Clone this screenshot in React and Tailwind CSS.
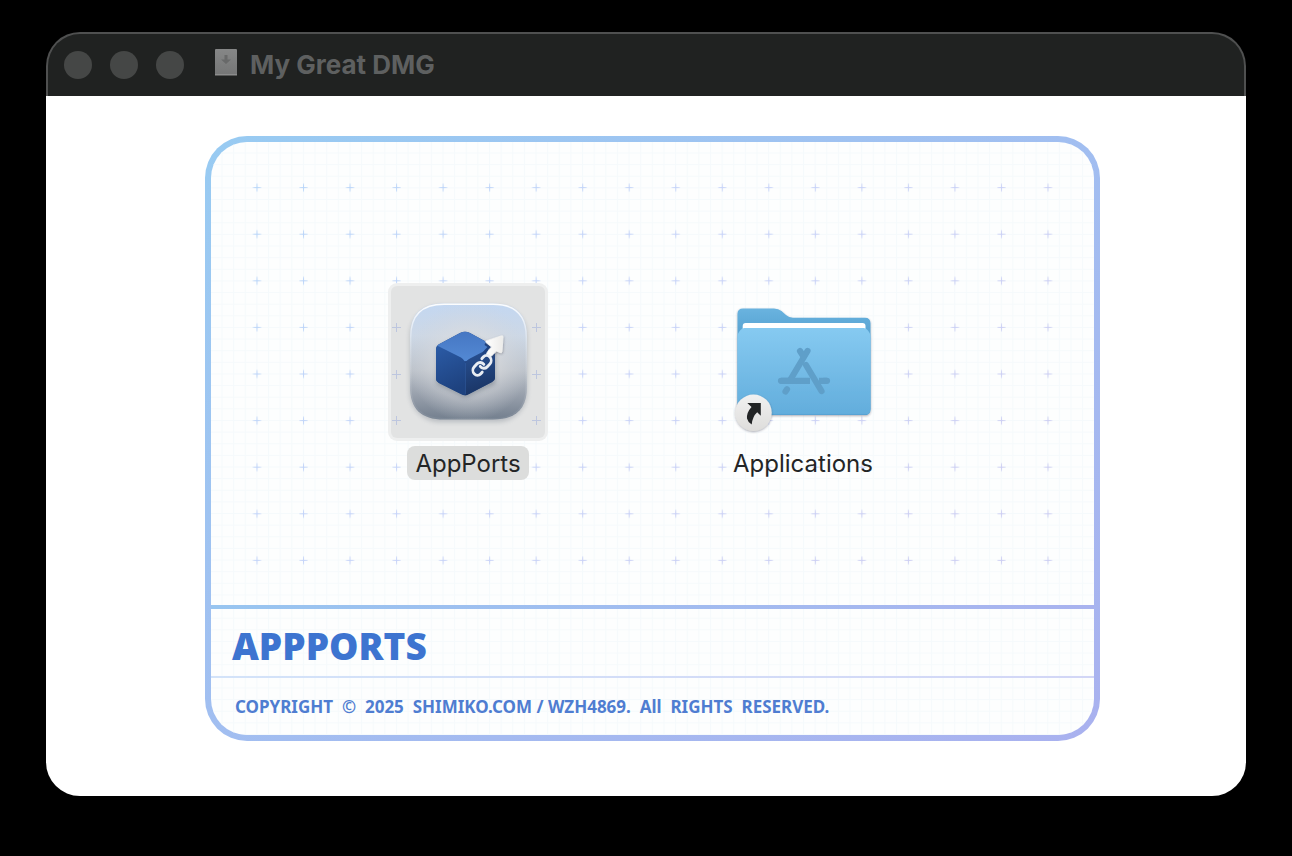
function DiskIcon() {
  return (
    <svg width="24" height="34" viewBox="0 0 24 34" aria-hidden="true">
      <defs>
        <linearGradient id="disk" x1="0" y1="0" x2="0" y2="1">
          <stop offset="0" stopColor="#868787" />
          <stop offset="1" stopColor="#757676" />
        </linearGradient>
      </defs>
      <rect x="1" y="1" width="22" height="26" rx="1" fill="url(#disk)" />
      <rect x="1" y="26" width="22" height="1.5" fill="#8b8c8c" />
      <path d="M10.500 7h3v4.500h3.500L12 16l-5-4.500h3.500z" fill="#686969" />
    </svg>
  );
}

function AppPortsIcon() {
  return (
    <svg className="h-40 w-40" viewBox="0 0 160 160" aria-hidden="true">
      <defs>
        <linearGradient id="tile" x1="0" y1="0" x2="0" y2="1">
          <stop offset="0" stopColor="#c3d7f1" />
          <stop offset="0.28" stopColor="#cdd8e6" />
          <stop offset="0.58" stopColor="#bcc2ca" />
          <stop offset="0.8" stopColor="#969eaa" />
          <stop offset="1" stopColor="#737f8e" />
        </linearGradient>
        <radialGradient id="tileGlow" cx="0.5" cy="0.5" r="0.52">
          <stop offset="0" stopColor="#e0e1e2" stopOpacity="0.9" />
          <stop offset="0.5" stopColor="#dbdcde" stopOpacity="0.6" />
          <stop offset="1" stopColor="#d0d4da" stopOpacity="0" />
        </radialGradient>
        <linearGradient id="rim" x1="0" y1="0" x2="0" y2="1">
          <stop offset="0" stopColor="#fff" stopOpacity="0.95" />
          <stop offset="0.3" stopColor="#fff" stopOpacity="0.3" />
          <stop offset="1" stopColor="#c4ccd6" stopOpacity="0.1" />
        </linearGradient>
        <linearGradient id="cubeTop" x1="0" y1="0" x2="0" y2="1">
          <stop offset="0" stopColor="#4677c3" />
          <stop offset="1" stopColor="#5389d4" />
        </linearGradient>
        <linearGradient id="cubeLeft" x1="0" y1="0" x2="0.3" y2="1">
          <stop offset="0" stopColor="#2b5ba6" />
          <stop offset="1" stopColor="#1e427f" />
        </linearGradient>
        <linearGradient id="cubeRight" x1="0" y1="0" x2="0.2" y2="1">
          <stop offset="0" stopColor="#2a5499" />
          <stop offset="1" stopColor="#1a3565" />
        </linearGradient>
        <linearGradient id="arrowFill" x1="0" y1="0" x2="1" y2="0">
          <stop offset="0" stopColor="#fff" />
          <stop offset="1" stopColor="#ecebe9" />
        </linearGradient>
        <filter id="soft" x="-20%" y="-20%" width="140%" height="140%">
          <feGaussianBlur stdDeviation="2.5" />
        </filter>
        <filter id="arrowShade" x="-30%" y="-30%" width="160%" height="160%">
          <feDropShadow dx="0.5" dy="1" stdDeviation="0.8" floodColor="#445" floodOpacity="0.45" />
        </filter>
      </defs>
      <rect y="1" width="160" height="158" rx="9" fill="#eeefef" />
      <rect x="3" y="4" width="154" height="152" rx="6" fill="#e2e3e3" />
      <g stroke="#bdc6df" strokeWidth="1">
        {[45, 92, 138].map((y) => (
          <path key={y} d={`M4 ${y}.500h9M8.500 ${y - 4}v9M144 ${y}.500h9M148.500 ${y - 4}v9`} />
        ))}
      </g>
      <rect x="22" y="24" width="117" height="116" rx="30" fill="#556070" opacity="0.3" filter="url(#soft)" />
      <path
        d="M56 21.500H105C128 21.500 139 32 139 55V104C139 127 128 137.500 105 137.500H56C33 137.500 22 127 22 104V55C22 32 33 21.500 56 21.500Z"
        fill="url(#tile)"
      />
      <path
        d="M56 21.500H105C128 21.500 139 32 139 55V104C139 127 128 137.500 105 137.500H56C33 137.500 22 127 22 104V55C22 32 33 21.500 56 21.500Z"
        fill="url(#tileGlow)"
      />
      <path
        d="M56 22.200H105C127.500 22.200 138.300 32.700 138.300 55V104C138.300 126.500 127.500 136.800 105 136.800H56C33.500 136.800 22.700 126.500 22.700 104V55C22.700 32.700 33.500 22.200 56 22.200Z"
        fill="none"
        stroke="url(#rim)"
        strokeWidth="1.400"
      />
      <path d="M50 66L77 52l30 14v36l-30 13-28-13z" fill="#28374c" opacity="0.35" filter="url(#soft)" />
      <path d="M48 67Q48 64 50.500 62.500L72 51Q77 48.500 82 51L104 63Q107 64.500 107 67V96Q107 98.500 104 100L81 112Q77 114 73 112L51 101Q48 99.500 48 97Z" fill="#224787" />
      <path d="M49 64Q50 62.800 51 62.200L72 51Q77 48.500 82 51L104 63L106 65L82 77.500Q77 80.500 73 78Z" fill="url(#cubeTop)" />
      <path d="M48 68Q48 63.500 51 64.500L73 75.500Q77.300 78 77.300 83V113.500Q75 113.300 73 112L51 101Q48 99.500 48 97Z" fill="url(#cubeLeft)" />
      <path d="M77.300 83Q77.500 79 81 77L104 65Q107 64 107 67V96Q107 98.500 104 100L81 112Q79 113.300 77.300 113.500Z" fill="url(#cubeRight)" />
      <path d="M77.500 81v31" stroke="#396ab5" strokeWidth="1" opacity="0.35" />
      <path d="M98 60L96.500 63L99.500 65Q94 70 92 76Q96 70 102 69L108 70V65z" fill="#1f4382" />
      <path
        d="M113 54Q115 53.200 115 55L114 69.500Q113.800 71.500 112 70.500L108.500 69Q105 73 101.500 75.500L98.500 71.500Q101 67 103.500 65L98 60.500Q97 59.300 98.500 58.700Z"
        fill="url(#arrowFill)"
        stroke="#f2f2f1"
        strokeWidth="0.800"
        strokeLinejoin="round"
        filter="url(#arrowShade)"
      />
      <g transform="translate(83 71.500) scale(0.920 0.990)" fill="none" stroke="#e9edf3" strokeWidth="3" strokeLinecap="round">
        <path d="M10 13a5 5 0 0 0 7.540.540l3-3a5 5 0 0 0-7.070-7.070l-1.720 1.710" />
        <path d="M14 11a5 5 0 0 0-7.540-.540l-3 3a5 5 0 0 0 7.070 7.070l1.710-1.710" />
      </g>
    </svg>
  );
}

function ApplicationsIcon() {
  return (
    <svg className="h-40 w-40" viewBox="0 0 160 160" aria-hidden="true">
      <defs>
        <linearGradient id="folderBack" x1="0" y1="0" x2="0" y2="1">
          <stop offset="0" stopColor="#69b3df" />
          <stop offset="0.25" stopColor="#57a2d1" />
          <stop offset="1" stopColor="#4f9aca" />
        </linearGradient>
        <linearGradient id="folderFront" x1="0" y1="0" x2="0" y2="1">
          <stop offset="0" stopColor="#86caf1" />
          <stop offset="1" stopColor="#62addc" />
        </linearGradient>
        <linearGradient id="badge" x1="0" y1="0" x2="0" y2="1">
          <stop offset="0" stopColor="#f1f1f1" />
          <stop offset="1" stopColor="#dedddb" />
        </linearGradient>
        <filter id="drop" x="-20%" y="-20%" width="140%" height="150%">
          <feDropShadow dx="0" dy="1" stdDeviation="1" floodColor="#334" floodOpacity="0.4" />
        </filter>
      </defs>
      <g filter="url(#drop)">
        <path d="M14.500 32Q14.500 26.500 20 26.500H51Q55.500 26.500 58.500 29L63 33Q66 35.700 70 35.700H142Q147.500 35.700 147.500 41.500V127Q147.500 133 141.500 133H20.500Q14.500 133 14.500 127Z" fill="url(#folderBack)" />
        <path d="M19.700 50V44Q19.700 41 22.700 41H139.500Q142.500 41 142.500 44V50Z" fill="#fff" />
        <path d="M14.500 54Q14.500 52 16 50L17.500 48Q19 46 21.500 46H140.500Q143 46 144.500 48L146 50Q147.500 52 147.500 54V127Q147.500 133 141.500 133H20.500Q14.500 133 14.500 127Z" fill="url(#folderFront)" />
      </g>
      <path d="M18 132.400H144" stroke="#4b99cb" strokeWidth="1" opacity="0.5" />
      <g fill="none" strokeLinecap="round" strokeWidth="6.200" stroke="#5f9fc9">
        <path d="M84.500 69L67.500 97.500" />
        <path d="M77 69L80.500 74.500" />
        <path d="M83 83L98.500 109" />
        <path d="M58 98.800H66M101 98.800H104" />
        <path d="M64 107.300L62.500 109.500" />
      </g>
      <path d="M58 98.800H87M96 98.800H104" stroke="#5f9fc9" strokeWidth="6.200" fill="none" />
      <circle cx="30.500" cy="130.700" r="18.200" fill="url(#badge)" filter="url(#drop)" />
      <path d="M24.300 121H37.800V133.800L34.200 130.300Q29.500 134.500 28.700 142.500Q25 140.500 24 136.500Q23.500 130.500 28.500 125Z" fill="#222425" />
    </svg>
  );
}

function FineGrid() {
  return (
    <svg className="absolute inset-0 h-full w-full" aria-hidden="true">
      <defs>
        <pattern id="fine" x="10.500" y="10.500" width="11.630" height="11.630" patternUnits="userSpaceOnUse">
          <path d="M0.500 0V11.630M0 0.500H11.630" stroke="#f1f8fb" strokeOpacity="0.65" />
        </pattern>
      </defs>
      <rect width="100%" height="100%" fill="url(#fine)" />
    </svg>
  );
}

function CrossMarks() {
  return (
    <div className="absolute inset-5">
      <svg className="h-full w-full" aria-hidden="true">
        <defs>
          <pattern id="cross" x="2.700" y="2.300" width="46.530" height="46.600" patternUnits="userSpaceOnUse">
            <path d="M19.300 23.300h8M23.300 19.300v8" stroke="#fff" strokeWidth="1" strokeOpacity="0.75" />
            <path d="M21.300 23.300h4M23.300 21.300v4" stroke="#fff" strokeWidth="1" strokeOpacity="0.6" />
          </pattern>
          <mask id="crossMask">
            <rect width="100%" height="100%" fill="url(#cross)" />
          </mask>
          <linearGradient id="crossTone" x1="0" y1="0" x2="1" y2="0.500">
            <stop offset="0" stopColor="#afd2f8" />
            <stop offset="0.5" stopColor="#c2cff8" />
            <stop offset="1" stopColor="#c8c9f1" />
          </linearGradient>
        </defs>
        <rect width="100%" height="100%" fill="url(#crossTone)" mask="url(#crossMask)" />
      </svg>
    </div>
  );
}

function DesktopItem({ label, selected, children }) {
  return (
    <button type="button" className="flex w-40 flex-col items-center gap-1">
      {children}
      <span className={selected ? "rounded-lg bg-[#dcdddc] px-2 pt-0.5 text-2xl leading-8" : "pt-0.5 text-2xl leading-8"}>
        {label}
      </span>
    </button>
  );
}

export default function App() {
  return (
    <main className="flex min-h-screen flex-col bg-black px-[46px] pt-8 pb-[60px] font-['Inter',sans-serif] text-[#232526]">
      <section className="flex grow flex-col">
        <header className="flex h-16 items-center rounded-t-[34px] border-2 border-b-0 border-[#4f5050] bg-[#202221] pl-4">
          <div className="flex gap-[18px]">
            <button type="button" aria-label="Close" className="h-7 w-7 rounded-full bg-[#454746]" />
            <button type="button" aria-label="Minimize" className="h-7 w-7 rounded-full bg-[#454746]" />
            <button type="button" aria-label="Zoom" className="h-7 w-7 rounded-full bg-[#454746]" />
          </div>
          <h1 className="flex items-center gap-3 pl-[30px] text-[26px] leading-8 font-bold text-[#5e6060]">
            <DiskIcon />
            My Great DMG
          </h1>
        </header>

        <div className="flex grow flex-col rounded-b-[34px] bg-white pt-10 pr-[146px] pb-[55px] pl-[159px]">
          <div className="flex grow flex-col rounded-[42px] bg-linear-to-br from-[#98cbf2] to-[#a9b1ef] p-[6px]">
            <div className="relative flex grow flex-col overflow-hidden rounded-[36px] bg-[#fdfefe]">
              <FineGrid />
              <div className="relative flex grow items-start pt-[140px] pl-[177px]">
                <CrossMarks />
                <div className="relative flex gap-[175px]">
                  <DesktopItem label="AppPorts" selected>
                    <AppPortsIcon />
                  </DesktopItem>
                  <DesktopItem label="Applications">
                    <ApplicationsIcon />
                  </DesktopItem>
                </div>
              </div>
              <div className="relative h-1 bg-linear-to-r from-[#98c5f0] to-[#a9b3ef]" />
              <h2 className="relative flex h-[67px] items-center pt-1.5 pl-[21px] font-['Noto_Sans',sans-serif] text-[37px] font-black text-[#3d74d0]">
                APPPORTS
              </h2>
              <div className="relative h-0.5 bg-linear-to-r from-[#d3e3f9] to-[#d2d6f6]" />
              <p className="relative flex h-[57px] items-center pl-6 font-['Noto_Sans',sans-serif] text-[17px] font-bold whitespace-pre text-[#4f7dd1]">
                {"COPYRIGHT  ©  2025  SHIMIKO.COM / WZH4869.  All  RIGHTS  RESERVED."}
              </p>
            </div>
          </div>
        </div>
      </section>
    </main>
  );
}
